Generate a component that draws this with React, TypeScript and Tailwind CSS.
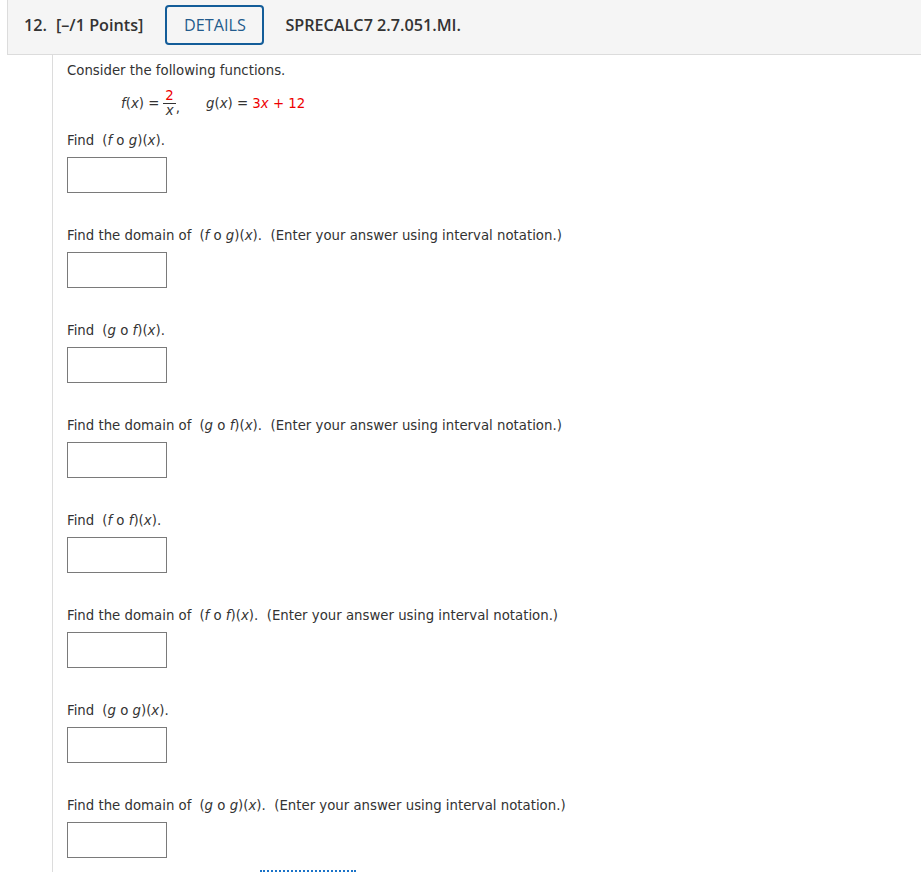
import type { ReactNode } from 'react';

const I = ({ children }: { children: ReactNode }) => <i className="italic">{children}</i>;

function Comp({ a, b }: { a: string; b: string }) {
  return (
    <span className="ml-[8px] whitespace-nowrap">
      (<I>{a}</I> o <I>{b}</I>)(<I>x</I>)
    </span>
  );
}

function AnswerBox() {
  return <div className="mt-[8px] h-[36px] w-[100px] border border-[#7a7a7a] bg-white" />;
}

const pairs: [string, string][] = [
  ['f', 'g'],
  ['g', 'f'],
  ['f', 'f'],
  ['g', 'g'],
];

export default function App() {
  return (
    <div className="min-h-screen bg-white text-[13.3px] leading-[16px] text-[#333]" style={{ fontFamily: 'Verdana, "DejaVu Sans", sans-serif' }}>
      <div
        className="ml-[7px] flex h-[55px] items-center border-b border-l border-[#dcdcdc] bg-[#f5f5f5] pb-[4px] pl-[16px] text-[16.2px] font-semibold text-[#333]"
        style={{ fontFamily: '"Open Sans", sans-serif' }}
      >
        <span>12.</span>
        <span className="ml-[9px]">[–/1 Points]</span>
        <span className="ml-[22px] flex h-[40px] w-[99px] items-center justify-center rounded-[4px] border-2 border-[#145d99] font-normal text-[#235b8c]">
          DETAILS
        </span>
        <span className="ml-[21px]">SPRECALC7 2.7.051.MI.</span>
      </div>

      <div className="ml-[52px] border-l border-[#dcdcdc] pl-[14px] pt-[8px]">
        <p>Consider the following functions.</p>

        <div className="mt-[10px] flex items-center pl-[54px]">
          <span>
            <I>f</I>(<I>x</I>) =
          </span>
          <span className="ml-[4px] inline-flex flex-col items-center leading-[14px]">
            <span className="border-b border-[#333] px-[2px] text-[#e00]">2</span>
            <I>x</I>
          </span>
          <span className="mt-[8px]">,</span>
          <span className="ml-[26px]">
            <I>g</I>(<I>x</I>) = <span className="text-[#e00]">3<I>x</I> + 12</span>
          </span>
        </div>

        <div className="mt-[15px]">
          {pairs.map(([a, b], i) => (
            <div key={i}>
              <div className="mb-[35px]">
                <p>
                  Find
                  <Comp a={a} b={b} />.
                </p>
                <AnswerBox />
              </div>
              <div className={i < 3 ? 'mb-[35px]' : ''}>
                <p>
                  Find the domain of
                  <Comp a={a} b={b} />. &nbsp;(Enter your answer using interval notation.)
                </p>
                <AnswerBox />
              </div>
            </div>
          ))}
        </div>

        <div className="ml-[193px] mt-[12px] w-[96px] border-t-2 border-dotted border-[#1a73c8] pb-[20px]" />
      </div>
    </div>
  );
}
